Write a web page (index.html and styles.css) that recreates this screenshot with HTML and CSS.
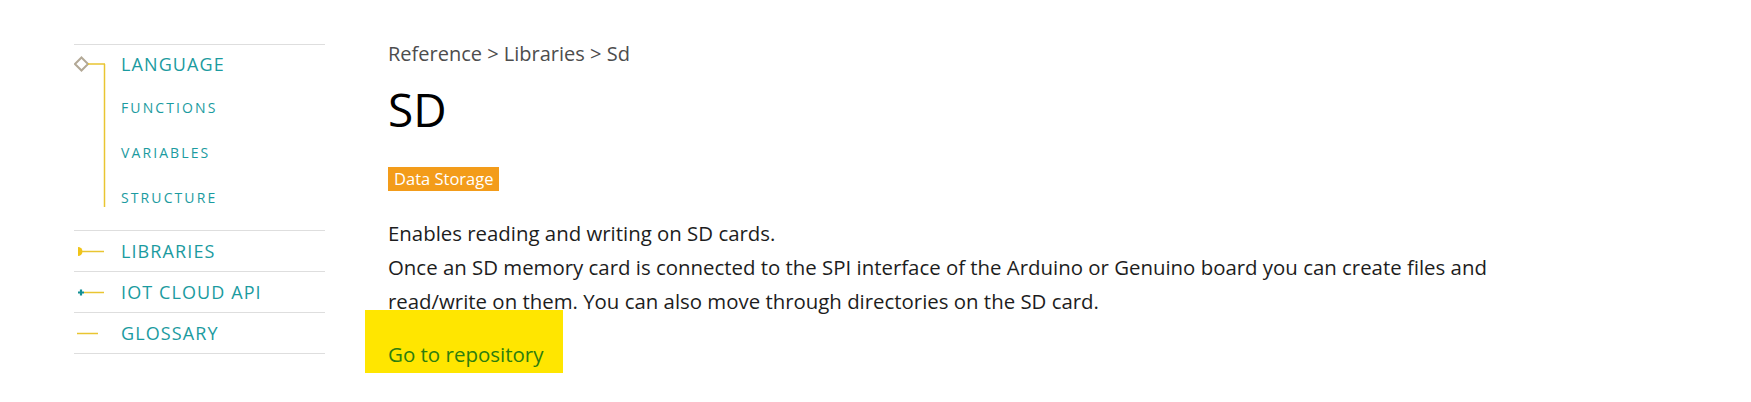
FILE: index.html
```html
<!DOCTYPE html>
<html lang="en">
<head>
<meta charset="utf-8">
<title>SD - Arduino Reference</title>
<link rel="stylesheet" href="styles.css">
</head>
<body>
<div class="page">
  <nav class="sidebar">
    <ul class="nav">
      <li class="nav-section">
        <svg class="tree" width="47" height="186" viewBox="0 0 47 186">
          <path d="M7.5 13.5 L14 20 L7.5 26.5 L1 20 Z" fill="none" stroke="#b3a997" stroke-width="2"/>
          <path d="M14 20 H31" stroke="#e9c531" stroke-width="1.5"/>
          <path d="M30.5 20 V163" stroke="#e9c531" stroke-width="1.5"/>
        </svg>
        <div class="nav-body">
          <a class="nav-title">LANGUAGE</a>
          <ul class="sub">
            <li><a>FUNCTIONS</a></li>
            <li><a>VARIABLES</a></li>
            <li><a>STRUCTURE</a></li>
          </ul>
        </div>
      </li>
      <li class="nav-row">
        <svg class="icon" width="47" height="40" viewBox="0 0 47 40">
          <path d="M4 16 A4.5 4.5 0 0 1 4 25 Z" fill="#f0c419"/>
          <path d="M8 20.5 H30" stroke="#e9c531" stroke-width="1.5"/>
        </svg>
        <a class="nav-title">LIBRARIES</a>
      </li>
      <li class="nav-row">
        <svg class="icon" width="47" height="40" viewBox="0 0 47 40">
          <path d="M10 20.5 H30" stroke="#e9c531" stroke-width="1.5"/>
          <path d="M4 20.5 H10 M7 17.5 V23.5" stroke="#138f94" stroke-width="2.2"/>
        </svg>
        <a class="nav-title">IOT CLOUD API</a>
      </li>
      <li class="nav-row">
        <svg class="icon" width="47" height="40" viewBox="0 0 47 40">
          <path d="M3 20.5 H24" stroke="#e9c531" stroke-width="1.5"/>
        </svg>
        <a class="nav-title">GLOSSARY</a>
      </li>
    </ul>
  </nav>
  <main class="content">
    <div class="breadcrumb">Reference &gt; Libraries &gt; Sd</div>
    <h1 class="title">SD</h1>
    <span class="badge">Data Storage</span>
    <p class="desc">Enables reading and writing on SD cards.<br>Once an SD memory card is connected to the SPI interface of the Arduino or Genuino board you can create files and read/write on them. You can also move through directories on the SD card.</p>
    <a class="repo">Go to repository</a>
  </main>
</div>
</body>
</html>
```

FILE: styles.css
```css
* { box-sizing: border-box; }
body {
  margin: 0;
  background: #fff;
  font-family: "Open Sans", "Liberation Sans", sans-serif;
}
.page {
  display: flex;
  gap: 63px;
  padding: 44px 0 0 74px;
}
.sidebar {
  width: 251px;
  flex: none;
}
.nav {
  list-style: none;
  margin: 0;
  padding: 0;
  border-top: 1px solid #dedede;
}
.nav > li {
  border-bottom: 1px solid #dedede;
}
.nav-section {
  display: flex;
  height: 186px;
}
.tree { flex: none; display: block; margin-top: -1px; }
.nav-body { padding-top: 6px; }
.nav-title {
  display: block;
  color: #1b9ba0;
  font-size: 18px;
  line-height: 27px;
  letter-spacing: 1.1px;
}
.sub {
  list-style: none;
  margin: 0;
  padding: 0;
}
.sub li {
  color: #1b9ba0;
  font-size: 14px;
  letter-spacing: 2.1px;
  line-height: 20px;
  margin-top: 25px;
}
.sub li:first-child { margin-top: 20px; }
.nav-row {
  display: flex;
  align-items: center;
  height: 41px;
}
.icon { flex: none; display: block; }

.content {
  width: 1150px;
  display: flex;
  flex-direction: column;
  align-items: flex-start;
}
.breadcrumb {
  color: #4d4d4d;
  font-size: 20px;
  line-height: 30px;
  margin-top: -5px;
}
.title {
  margin: 12px 0 0;
  font-size: 46px;
  font-weight: 400;
  line-height: 56px;
  color: #000;
}
.badge {
  display: block;
  margin-top: 30px;
  background: #f39c1a;
  color: #fff;
  font-size: 16.5px;
  line-height: 24px;
  padding: 0 6px;
}
.desc {
  margin: 25px 0 0;
  color: #1d1d1d;
  font-size: 20.4px;
  line-height: 34px;
}
.repo {
  display: block;
  margin: -8px 0 0 -23px;
  padding: 30px 19px 5px 23px;
  background: #ffe600;
  color: #2e7d0e;
  font-size: 20.5px;
  line-height: 28px;
}
```
